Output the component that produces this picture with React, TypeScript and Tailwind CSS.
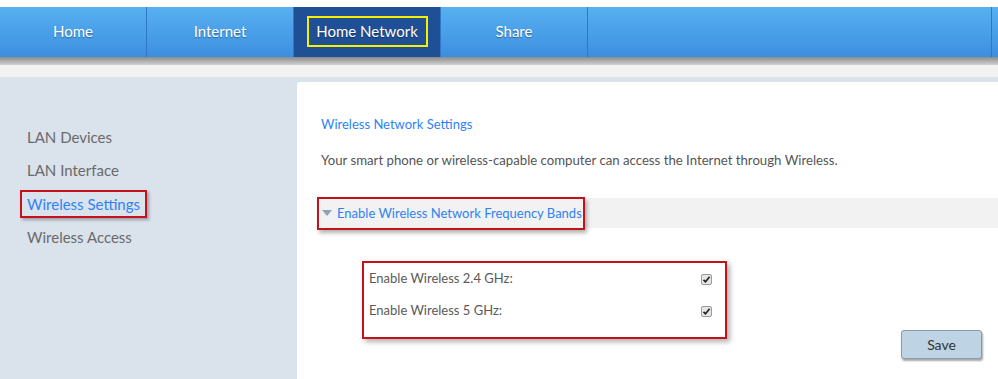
import React from "react";

const tabs = ["Home", "Internet", "Home Network", "Share"];
const sideItems = ["LAN Devices", "LAN Interface", "Wireless Settings", "Wireless Access"];

function CheckBox() {
  return (
    <span className="flex h-[11px] w-[11px] items-center justify-center rounded-[2px] border border-[#9a9a9a] bg-[#e6e6e6]">
      <svg width="9" height="9" viewBox="0 0 9 9">
        <path d="M1.5 4.8 L3.5 6.8 L7.6 1.8" fill="none" stroke="#222" strokeWidth="1.7" />
      </svg>
    </span>
  );
}

export default function App() {
  return (
    <div
      className="h-[379px] w-full overflow-hidden bg-white"
      style={{ fontFamily: "Lato, 'Open Sans', sans-serif" }}
    >
      <div className="h-[7px] bg-white" />
      {/* top nav */}
      <div className="flex h-[50px] bg-gradient-to-b from-[#57b0f2] to-[#3d8fdf]">
        {tabs.map((t) => {
          const active = t === "Home Network";
          return (
            <div
              key={t}
              className={
                "flex w-[147px] items-center justify-center border-r border-[#2f78c8] pb-[1px] text-[15px] text-white [text-shadow:0_1px_1px_rgba(0,0,0,0.35)] " +
                (active ? "bg-[#1f4f94]" : "")
              }
            >
              {active ? (
                <span className="flex h-[31px] w-[121px] items-center justify-center border-2 border-[#f4f000]">
                  {t}
                </span>
              ) : (
                t
              )}
            </div>
          );
        })}
        <div className="w-[404px] border-r border-[#2f78c8]" />
        <div className="flex-1" />
      </div>
      <div className="h-[8px] bg-gradient-to-b from-[#8b8b8b] to-[#d2d2d2]" />
      <div className="h-[12px] bg-[#f2f2f2]" />

      {/* body */}
      <div className="flex h-[302px] bg-[#dae2ec]">
        <div className="w-[297px] pl-[27px] pt-[43px] text-[15px] text-[#6a6a6a]">
          {sideItems.map((s) => {
            const active = s === "Wireless Settings";
            return (
              <div key={s} className="flex h-[33.6px] items-center">
                {active ? (
                  <span className="-ml-[7px] flex h-[28px] items-center border-2 border-[#c4121b] px-[5px] text-[#2f82f5] shadow-[2px_2px_3px_rgba(0,0,0,0.3)]">
                    {s}
                  </span>
                ) : (
                  s
                )}
              </div>
            );
          })}
        </div>

        <div className="mt-[5px] flex-1 rounded-tl-[3px] bg-white pt-[33px] text-[13px]">
          <div className="pl-[24px] text-[#2f82f5]">Wireless Network Settings</div>
          <div className="mt-[16px] pl-[24px] text-[13.2px] text-[#555]">
            Your smart phone or wireless-capable computer can access the Internet through Wireless.
          </div>

          <div className="ml-[23px] mt-[28px] flex h-[30px] items-center bg-[#f2f2f2]">
            <span className="-ml-[3px] flex h-[33px] items-center gap-[5px] border-2 border-[#c4121b] pl-[3px] pr-[1px] text-[#2f82f5] shadow-[2px_3px_4px_rgba(0,0,0,0.3)]">
              <svg width="10" height="6" viewBox="0 0 10 6">
                <path d="M0 0 L10 0 L5 6 Z" fill="#8fa3b3" />
              </svg>
              Enable Wireless Network Frequency Bands
            </span>
          </div>

          <div className="flex items-start">
            <div className="ml-[65px] mt-[33px] flex h-[78px] w-[365px] flex-col border-2 border-[#c4121b] pl-[5px] pr-[13px] pt-[5px] text-[#5a5a5a] shadow-[3px_3px_5px_rgba(0,0,0,0.3)]">
              <div className="flex h-[33px] items-start justify-between pt-[1px]">
                <span>Enable Wireless 2.4 GHz:</span>
                <span className="mt-[5px]">
                  <CheckBox />
                </span>
              </div>
              <div className="flex h-[33px] items-start justify-between">
                <span>Enable Wireless 5 GHz:</span>
                <span className="mt-[5px]">
                  <CheckBox />
                </span>
              </div>
            </div>
            <div className="flex-1" />
            <button className="mr-[16px] mt-[102px] h-[29px] w-[81px] rounded-[3px] border border-[#8c9aa5] bg-[#bed3e3] text-[14px] text-[#333] shadow-[1px_2px_2px_rgba(0,0,0,0.35)]">
              Save
            </button>
          </div>
        </div>
      </div>
    </div>
  );
}
